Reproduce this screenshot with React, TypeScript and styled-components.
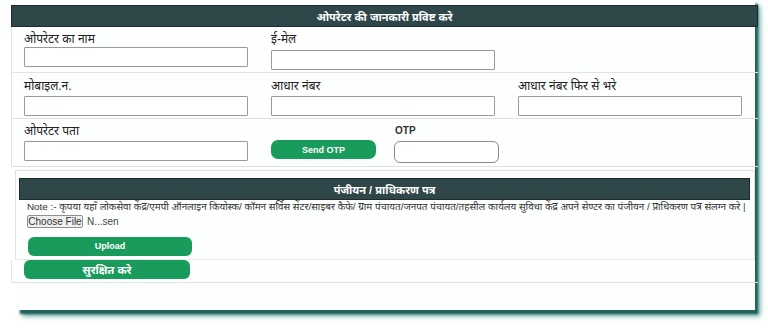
import styled, { createGlobalStyle } from 'styled-components';

const GlobalStyle = createGlobalStyle`
  html, body {
    margin: 0;
    padding: 0;
    background: #ffffff;
  }
  body {
    font-family: "Liberation Sans", "Noto Sans", Arial, sans-serif;
    color: #222;
  }
`;

const Page = styled.div`
  height: 328px;
  overflow: hidden;
`;

const Card = styled.div`
  margin: 0 13px 0 17px;
  height: 310px;
  background: #fdfefe;
  box-shadow: 3px 4px 2px #245f5a, 5px 6px 5px #5fa79f;
`;

const Inner = styled.div`
  margin: 0 -3px 0 -6px;
  padding-top: 5px;
`;

const Head = styled.div`
  height: 22px;
  box-sizing: border-box;
  background: #30474a;
  border: 1px solid #1c2a2b;
  color: #ffffff;
  font-size: 11px;
  font-weight: bold;
  display: flex;
  align-items: center;
  justify-content: center;
`;

type RowProps = {
  $pad?: number,
  $height: number,
};

const Row = styled.div<RowProps>`
  display: grid;
  grid-template-columns: repeat(3, 247px);
  align-items: start;
  box-sizing: border-box;
  height: ${({ $height }) => $height}px;
  padding: ${({ $pad }) => $pad ?? 4}px 0 0 12px;
  border-left: 1px solid #e2e2e2;
  border-bottom: 1px solid #e2e2e2;
`;

const OtpRow = styled(Row)`
  grid-template-columns: 247px 123px auto;
`;

const Field = styled.div<{ $gap?: number }>`
  display: flex;
  flex-direction: column;
  gap: ${({ $gap }) => $gap ?? 0}px;
`;

const Label = styled.label`
  font-size: 12px;
  line-height: 16px;
  color: #222;
`;

const SmallLabel = styled(Label)`
  font-size: 10px;
  font-weight: bold;
  color: #333;
  padding-left: 1px;
`;

const Input = styled.input<{ $round?: boolean, $w?: number }>`
  box-sizing: border-box;
  width: ${({ $w }) => $w ?? 224}px;
  height: ${({ $round }) => ($round ? 22 : 20)}px;
  margin: 0;
  border: 1px solid ${({ $round }) => ($round ? '#8a8a8a' : '#9a9a9a')};
  border-radius: ${({ $round }) => ($round ? 6 : 1)}px;
  background: #ffffff;
  outline: none;
`;

const GreenButton = styled.button<{ $w: number, $hindi?: boolean }>`
  box-sizing: border-box;
  width: ${({ $w }) => $w}px;
  height: 19px;
  padding: 0;
  border: none;
  border-radius: 6px;
  background: #199b5b;
  color: #ffffff;
  font-family: inherit;
  font-size: ${({ $hindi }) => ($hindi ? 11 : 9)}px;
  font-weight: bold;
  cursor: pointer;
`;

const SendOtp = styled(GreenButton)`
  margin-top: 17px;
  border-radius: 7px;
`;

const Section = styled.div`
  margin: 3px 3px 0 4px;
  padding: 7px 4px 3px 3px;
  border: 1px solid #e2e2e2;
  border-bottom-color: #e8e8e8;
`;

const Note = styled.div`
  padding-left: 8px;
  font-size: 9.85px;
  line-height: 13px;
  color: #333;
  white-space: nowrap;
`;

const FileRow = styled.div`
  display: flex;
  align-items: center;
  gap: 4px;
  margin: 1px 0 0 8px;
  height: 14px;
  font-size: 10px;
  color: #444;
`;

const FileButton = styled.span`
  box-sizing: border-box;
  display: inline-flex;
  align-items: center;
  justify-content: center;
  width: 56px;
  height: 13px;
  border: 1px solid #8f8f8f;
  border-radius: 2px;
  background: #efefef;
  color: #333;
  font-size: 10px;
`;

const UploadWrap = styled.div`
  margin: 7px 0 0 9px;
`;

const SaveRow = styled.div`
  box-sizing: border-box;
  height: 23px;
  padding-left: 12px;
  border-left: 1px solid #e2e2e2;
  border-bottom: 1px solid #e2e2e2;
`;

export default function App() {
  return (
    <Page>
      <GlobalStyle />
      <Card>
        <Inner>
          <Head>ओपरेटर की जानकारी प्रविष्ट करे</Head>
          <Row $height={46}>
            <Field>
              <Label>ओपरेटर का नाम</Label>
              <Input type="text" />
            </Field>
            <Field $gap={3}>
              <Label>ई-मेल</Label>
              <Input type="text" />
            </Field>
          </Row>
          <Row $height={46} $pad={5}>
            <Field $gap={2}>
              <Label>मोबाइल.न.</Label>
              <Input type="text" />
            </Field>
            <Field $gap={2}>
              <Label>आधार नंबर</Label>
              <Input type="text" />
            </Field>
            <Field $gap={2}>
              <Label>आधार नंबर फिर से भरे</Label>
              <Input type="text" />
            </Field>
          </Row>
          <OtpRow $height={48}>
            <Field $gap={2}>
              <Label>ओपरेटर पता</Label>
              <Input type="text" />
            </Field>
            <div>
              <SendOtp $w={105}>Send OTP</SendOtp>
            </div>
            <Field $gap={2}>
              <SmallLabel>OTP</SmallLabel>
              <Input type="text" $round $w={105} />
            </Field>
          </OtpRow>
          <Section>
            <Head>पंजीयन / प्राधिकरण पत्र</Head>
            <Note>
              Note :- कृपया यहाँ लोकसेवा केंद्र/एमपी ऑनलाइन कियोस्क/ कॉमन सर्विस सेंटर/साइबर कैफे/ ग्राम पंचायत/जनपत पंचायत/तहसील कार्यलय सुविधा केंद्र अपने सेण्टर का पंजीयन / प्राधिकरण पत्र संलग्न करे |
            </Note>
            <FileRow>
              <FileButton>Choose File</FileButton>
              <span>N...sen</span>
            </FileRow>
            <UploadWrap>
              <GreenButton $w={164}>Upload</GreenButton>
            </UploadWrap>
          </Section>
          <SaveRow>
            <GreenButton $w={166} $hindi>सुरक्षित करे</GreenButton>
          </SaveRow>
        </Inner>
      </Card>
    </Page>
  );
}
